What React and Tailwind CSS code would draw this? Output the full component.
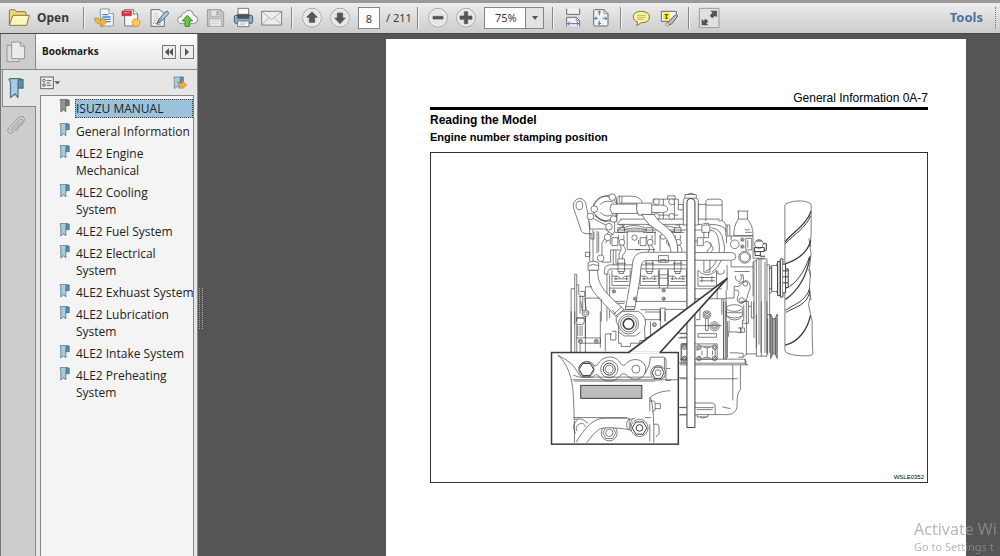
import React, { useState } from 'react';

const bookmarks = [
  { id: 1, title: 'ISUZU MANUAL' },
  { id: 2, title: 'General Information' },
  { id: 3, title: '4LE2 Engine\nMechanical' },
  { id: 4, title: '4LE2 Cooling\nSystem' },
  { id: 5, title: '4LE2 Fuel System' },
  { id: 6, title: '4LE2 Electrical\nSystem' },
  { id: 7, title: '4LE2 Exhuast System' },
  { id: 8, title: '4LE2 Lubrication\nSystem' },
  { id: 9, title: '4LE2 Intake System' },
  { id: 10, title: '4LE2 Preheating\nSystem' },
];

const Icon = ({ children }) => (
  <svg viewBox="0 0 66 66" className="size-[22px] shrink-0" fill="none" stroke="#6b6b6b" strokeWidth="3" strokeLinejoin="round" aria-hidden="true">
    {children}
  </svg>
);

const FolderIcon = () => (
  <Icon>
    <path d="M4 54 V12 Q4 8 8 8 H20 L25 14 H51 Q54 14 54 18 V26" fill="#e9d878" stroke="#8a7a3a" />
    <path d="M4 55 L15 25 H64 L56 55 Z" fill="#fdf6b8" stroke="#8a7a3a" />
    <path d="M12 47 L19 31 H55" stroke="#fffde8" />
  </Icon>
);

const ExportIcon = () => (
  <Icon>
    <path d="M22 6 H48 L61 19 V57 H22 Z" fill="#f3f7fb" stroke="#8d949b" />
    <path d="M48 6 V19 H61" fill="#fff" stroke="#8d949b" />
    <path d="M28 23 H46 M28 30 H53 M28 37 H53 M34 44 H53" stroke="#4384d6" strokeWidth="4" />
    <path d="M5 33 Q3 51 26 51 V60 L42 45 L26 32 V41 Q16 41 16 33 Z" fill="#f5b43c" stroke="#b8832b" strokeWidth="2" />
  </Icon>
);

const CreateIcon = () => (
  <Icon>
    <path d="M11 8 H37 L50 21 V57 H11 Z" fill="#f5f5f5" stroke="#777" />
    <path d="M37 8 V21 H50" fill="#fff" stroke="#777" />
    <rect x="3" y="12" width="28" height="14" fill="#e2353b" stroke="#a62b30" strokeWidth="2" />
    <path d="M8 17 H25" stroke="#f28a8c" />
    <circle cx="45" cy="47" r="11" fill="#f9bd4b" stroke="#d99a32" strokeWidth="5" strokeDasharray="5 3.6" />
    <circle cx="45" cy="47" r="9" fill="#fcc75d" stroke="none" />
  </Icon>
);

const SignIcon = () => (
  <Icon>
    <path d="M6 8 H33 L46 21 V58 H6 Z" fill="#f3f3f3" />
    <path d="M13 20 H27 M13 27 H31 M13 34 H28 M13 41 H24" stroke="#b5b5b5" strokeWidth="2" />
    <path d="M24 50 L30 36 L49 15 Q57 10 58 16 Q59 22 54 26 L37 43 Z" fill="#a9c9de" stroke="#4e6475" />
    <path d="M24 50 L40 32 M11 51 Q17 43 20 49 T35 51" stroke="#52616d" strokeWidth="2" />
  </Icon>
);

const CloudIcon = () => (
  <Icon>
    <path d="M14 50 Q1 49 2 38 Q3 28 13 28 Q14 16 23 17 Q28 8 38 10 Q50 12 50 25 Q62 26 62 38 Q61 50 49 50 Z" fill="#f4f4f4" stroke="#888" />
    <path d="M31 25 L47 42 H38 V58 H24 V42 H15 Z" fill="#66c83d" stroke="#3f8f2b" />
  </Icon>
);

const SaveIcon = () => (
  <Icon>
    <path d="M7 8 H48 L56 16 V58 H7 Z" fill="#c6c6c6" stroke="#9b9b9b" />
    <rect x="17" y="9" width="28" height="19" fill="#e3e3e3" stroke="#a5a5a5" strokeWidth="2" />
    <rect x="34" y="12" width="7" height="13" fill="#aaa" stroke="none" />
    <rect x="14" y="36" width="35" height="22" fill="#ededed" stroke="#a5a5a5" strokeWidth="2" />
    <path d="M19 43 H44 M19 50 H44" stroke="#bdbdbd" strokeWidth="2" />
  </Icon>
);

const PrintIcon = () => (
  <Icon>
    <path d="M15 26 V4 H47 V26" fill="#fafafa" stroke="#777" />
    <rect x="4" y="25" width="55" height="24" rx="5" fill="#7eb2d2" stroke="#4a6070" />
    <path d="M14 22 H48 V34 H14 Z" fill="#4b5760" stroke="#3e4950" strokeWidth="2" />
    <path d="M14 42 H48 V59 H14 Z" fill="#fafafa" stroke="#777" />
    <path d="M20 48 H42 M20 53 H36" stroke="#aaa" strokeWidth="2" />
  </Icon>
);

const MailIcon = () => (
  <Icon>
    <rect x="2" y="13" width="60" height="41" fill="#ededed" stroke="#808080" />
    <path d="M4 15 L32 38 L60 15 M4 52 L24 32 M60 52 L40 32" stroke="#8f8f8f" strokeWidth="2" />
  </Icon>
);

const RoundIcon = ({ d }) => (
  <Icon>
    <circle cx="33" cy="32" r="28" fill="#e6e6e6" stroke="#a3a3a3" />
    <circle cx="33" cy="32" r="25" stroke="#f8f8f8" strokeWidth="2" />
    <path d={d} fill="#555" stroke="#555" strokeWidth="2" />
  </Icon>
);

const FitWidthIcon = () => (
  <Icon>
    <path d="M14 5 V22 H53 V5" fill="#f1f1f1" />
    <path d="M14 58 V31 H43 L53 41 V58" fill="#f1f1f1" />
    <path d="M43 31 V41 H53" strokeWidth="2" />
    <path d="M17 50 H50 M23 44 L17 50 L23 56 M44 44 L50 50 L44 56" stroke="#4f6fc0" />
  </Icon>
);

const FitPageIcon = () => (
  <Icon>
    <path d="M13 8 H42 L54 20 V54 Q54 57 50 57 H15 Q11 57 11 54 V10 Q11 8 13 8 Z" fill="#f1f1f1" />
    <path d="M42 8 V20 H54" strokeWidth="2" />
    <path d="M28 12 V25 M23 17 L28 12 L33 17 M28 53 V41 M23 48 L28 53 L33 48 M14 34 H24 M19 29 L14 34 L19 39 M51 34 H38 M46 29 L51 34 L46 39" stroke="#4f6fc0" />
  </Icon>
);

const CommentIcon = () => (
  <Icon>
    <path d="M34 13 Q58 14 58 30 Q58 47 34 47 L20 56 L23 45 Q10 41 10 29 Q10 14 34 13 Z" fill="#fbf59b" stroke="#777548" />
    <path d="M21 25 H47 M21 31 H47 M21 37 H41" stroke="#9a9560" strokeWidth="2" />
  </Icon>
);

const HighlightIcon = () => (
  <Icon>
    <path d="M10 13 H55 V32 L45 43 H10 Z" fill="#f4f4f4" />
    <rect x="15" y="17" width="20" height="21" fill="#fff200" stroke="none" />
    <path d="M20 23 H31 M25 23 V34 M22 34 H29" stroke="#444" />
    <path d="M28 48 L48 27 Q58 20 59 27 L41 51 L30 54 Z" fill="#bdbdbd" stroke="#666" />
    <circle cx="28" cy="52" r="5" fill="#fff04a" stroke="#777" strokeWidth="2" />
  </Icon>
);

const FullscreenIcon = () => (
  <Icon>
    <rect x="4" y="4" width="59" height="58" fill="#e0e0e0" stroke="#9c9c9c" />
    <path d="M37 11 H57 V31 L51 26 L43 34 L35 26 L43 17 Z M11 36 L17 41 L23 35 L31 43 L25 49 L31 55 H11 Z" fill="#555" stroke="none" />
  </Icon>
);

const BookmarkIcon = ({ gray, className }) => (
  <svg viewBox="0 0 32 42" className={className} strokeWidth="2.5" strokeLinejoin="round" aria-hidden="true">
    <path d="M20 3 H30 V20 H20 Z" fill={gray ? '#777' : '#5f90ad'} stroke={gray ? '#666' : '#48697e'} />
    <path d="M2 3 Q3 1 6 1 H25 Q20 2 20 8 V39 L14 32 L5 39 V8 Z" fill={gray ? '#929292' : '#a6cbe3'} stroke={gray ? '#666' : '#56758a'} />
  </svg>
);

const PagesIcon = () => (
  <svg viewBox="0 0 60 66" className="h-[22px] w-5" fill="#dcdcdc" stroke="#969696" strokeWidth="3" aria-hidden="true">
    <path d="M3 13 H40 V62 H3 Z" />
    <path d="M17 3 H43 L56 16 V53 H17 Z" fill="#ebebeb" />
    <path d="M43 3 V16 H56" fill="none" />
  </svg>
);

const ClipIcon = () => (
  <svg viewBox="0 0 60 62" className="size-5" fill="none" stroke="#9c9c9c" strokeWidth="3" strokeLinecap="round" aria-hidden="true">
    <path d="M16 42 L40 16 Q46 11 49 15 Q52 19 47 25 L23 52 Q14 61 7 55 Q0 48 8 39 L35 10 Q46 0 54 6 Q61 13 52 25 L30 49" />
    <path d="M13 46 Q17 51 22 45 L42 23" />
  </svg>
);

const Separator = () => <div className="mx-[5px] h-[22px] w-0.5 shrink-0 border-l border-[#858585] bg-[#f5f5f5]" />;

const ToolButton = ({ label, children }) => (
  <button aria-label={label} title={label} className="flex h-6 w-7 shrink-0 items-center justify-center">
    {children}
  </button>
);

const Toolbar = () => {
  const [page, setPage] = useState('8');
  const [zoom, setZoom] = useState('75%');

  return (
    <header className="flex h-[34px] shrink-0 items-center border-t-3 border-b border-t-[#9a9a9a] border-b-[#4a4a4a] bg-linear-to-b from-[#ededed] to-[#cccccc] text-xs text-[#3a3a3a]">
      <button className="flex w-[78px] shrink-0 items-center gap-[7px] pl-2 font-bold">
        <FolderIcon />
        Open
      </button>
      <Separator />
      <ToolButton label="Export"><ExportIcon /></ToolButton>
      <ToolButton label="Create"><CreateIcon /></ToolButton>
      <ToolButton label="Sign"><SignIcon /></ToolButton>
      <ToolButton label="Upload"><CloudIcon /></ToolButton>
      <ToolButton label="Save"><SaveIcon /></ToolButton>
      <ToolButton label="Print"><PrintIcon /></ToolButton>
      <ToolButton label="Email"><MailIcon /></ToolButton>
      <Separator />
      <ToolButton label="Previous page"><RoundIcon d="M33 14 L49 31 H41 V46 H25 V31 H17 Z" /></ToolButton>
      <ToolButton label="Next page"><RoundIcon d="M33 50 L49 33 H41 V18 H25 V33 H17 Z" /></ToolButton>
      <input
        aria-label="Page number"
        value={page}
        onChange={(e) => setPage(e.target.value)}
        className="ml-1 h-[22px] w-[22px] shrink-0 border border-[#858585] bg-white text-center text-[11px]"
      />
      <span className="w-8 shrink-0 pl-1.5 text-[11px] whitespace-pre">/ 211</span>
      <Separator />
      <ToolButton label="Zoom out"><RoundIcon d="M18 28 H48 V36 H18 Z" /></ToolButton>
      <ToolButton label="Zoom in"><RoundIcon d="M28 14 H38 V27 H51 V37 H38 V50 H28 V37 H15 V27 H28 Z" /></ToolButton>
      <div className="relative mr-[3px] ml-1 h-[22px] w-[60px] shrink-0 border border-[#858585] bg-white">
        <select
          aria-label="Zoom level"
          value={zoom}
          onChange={(e) => setZoom(e.target.value)}
          className="block h-5 w-full appearance-none pl-2.5 text-[11px]"
        >
          <option>75%</option>
          <option>100%</option>
        </select>
        <div className="pointer-events-none absolute inset-y-0 right-0 flex w-[18px] items-center justify-center border-l border-[#858585] bg-[#e3e3e3]">
          <div className="border-x-3 border-t-4 border-x-transparent border-t-[#555]" />
        </div>
      </div>
      <Separator />
      <ToolButton label="Fit width"><FitWidthIcon /></ToolButton>
      <ToolButton label="Fit page"><FitPageIcon /></ToolButton>
      <Separator />
      <ToolButton label="Comment"><CommentIcon /></ToolButton>
      <ToolButton label="Highlight"><HighlightIcon /></ToolButton>
      <Separator />
      <ToolButton label="Full screen"><FullscreenIcon /></ToolButton>
      <button className="mr-3 ml-auto text-[13px] font-bold text-[#4f739b]">Tools</button>
      <div className="mr-1 h-[22px] border-l border-dotted border-[#777]" />
    </header>
  );
};

const Rail = () => (
  <nav className="flex w-9 shrink-0 flex-col border-l border-[#777] bg-[#cdcdcd]">
    <button aria-label="Pages" className="flex h-9 items-center justify-center border-r border-b border-[#8a8a8a] pr-1">
      <PagesIcon />
    </button>
    <button aria-label="Bookmarks" className="ml-px flex h-[37px] items-center justify-center border-b border-l border-[#8a8a8a] bg-[#e6e6e6] pr-2">
      <BookmarkIcon className="h-[21px] w-4" />
    </button>
    <button aria-label="Attachments" className="flex h-9 items-center justify-center border-r border-[#8a8a8a] pr-1">
      <ClipIcon />
    </button>
    <div className="grow border-r border-[#8a8a8a]" />
  </nav>
);

const BookmarkPanel = () => {
  const [selected, setSelected] = useState(1);

  return (
    <aside className="flex w-[162px] shrink-0 flex-col border-r border-[#8a8a8a] bg-[#e6e6e6]">
      <div className="flex h-9 shrink-0 items-center border-b border-[#8a8a8a] bg-linear-to-b from-white to-[#e4e4e4] pr-[3px] pl-1.5">
        <h2 className="grow text-[10px] font-bold text-[#1c1c1c]">Bookmarks</h2>
        <button aria-label="Collapse" className="mr-1 flex size-3.5 items-center justify-center border border-[#777] bg-[#eee]">
          <svg viewBox="0 0 10 10" className="size-2.5" fill="#555"><path d="M5 1 V9 L1 5 Z M9 1 V9 L5 5 Z" /></svg>
        </button>
        <button aria-label="Expand" className="flex size-3.5 items-center justify-center border border-[#777] bg-[#eee]">
          <svg viewBox="0 0 10 10" className="size-2.5" fill="#555"><path d="M3 1 V9 L7 5 Z" /></svg>
        </button>
      </div>

      <div className="flex h-[25px] shrink-0 items-center justify-between pr-2.5 pl-1">
        <button aria-label="Options">
          <svg viewBox="0 0 63 42" className="h-3.5 w-[21px]" fill="none" stroke="#666" strokeWidth="3">
            <rect x="2" y="3" width="38" height="35" fill="#eee" />
            <circle cx="12" cy="14" r="4" />
            <circle cx="12" cy="27" r="4" />
            <path d="M20 14 H34 M20 21 H30 M20 28 H34" />
            <path d="M43 16 H61 L52 25 Z" fill="#555" stroke="none" />
          </svg>
        </button>
        <button aria-label="Find current bookmark">
          <svg viewBox="0 0 42 42" className="size-3.5" strokeLinejoin="round">
            <path d="M22 3 H31 V20 H22 Z" fill="#5f90ad" stroke="#48697e" strokeWidth="2" />
            <path d="M2 3 H26 Q21 4 21 9 V38 L13 31 L4 38 V8 Z" fill="#a6cbe3" stroke="#56758a" strokeWidth="2" />
            <path d="M14 17 L21 23 H27 V15 L41 27 L27 39 V32 H19 Z" fill="#f6b43b" stroke="#b17b24" strokeWidth="2" />
          </svg>
        </button>
      </div>

      <ul className="mr-[3px] ml-1 flex grow flex-col gap-[5px] border-x border-t border-[#858585] bg-[#f4f4f4] pt-[3px] font-['Open_Sans','Noto_Sans',sans-serif] text-xs leading-[17px] whitespace-pre text-[#222]">
        {bookmarks.map((item) => (
          <li key={item.id} className="flex items-start pl-[18px]">
            <BookmarkIcon gray={item.id === selected} className="mr-[5px] h-3.5 w-[11px] shrink-0" />
            <a
              href="#"
              onClick={() => setSelected(item.id)}
              className={item.id === selected ? 'grow border border-dotted border-[#444] bg-[#9bc3de]' : 'grow pl-px'}
            >
              {item.title}
            </a>
          </li>
        ))}
      </ul>
    </aside>
  );
};

const Bolt = ({ x, y, r = 8 }) => (
  <>
    <circle cx={x} cy={y} r={r} fill="white" />
    <circle cx={x} cy={y} r={r / 2} />
  </>
);

/* injector with its fuel line, one for each cylinder */
const Injector = ({ x }) => (
  <g transform={`translate(${x} 0)`}>
    <path d="M-10 138 H10 V152 H-10 Z M-6 130 H6 V138 M-20 152 H20 M-28 168 H-10 V192 H-28 Z M-33 175 V188 M-8 160 V174 M8 160 V174" />
    <circle cx="2" cy="182" r="9" />
    <path d="M-4 190 Q4 200 -2 208 Q-10 216 -6 230 M5 190 Q18 205 10 214 Q0 222 4 232 M-10 232 H10 V270 H-10 Z M-14 245 H14 M-7 270 V276 H7 V270" />
    <path d="M-28 266 V312 H27 V266 M-28 284 H-10 L-4 290 M27 284 H10 L4 290 M-22 292 H22 M-22 300 H22 M-16 284 V296 M16 284 V296" />
  </g>
);

const CylinderHead = () => (
  <g transform="translate(345 84)">
    <path d="M84 78 C80 54 102 44 114 54 C124 62 122 76 127 92 L133 142 M84 78 L108 148 Q112 156 122 156 H140" />
    <ellipse cx="102" cy="71" rx="10" ry="13" />
    <path d="M133 120 V240 M143 145 V240 M155 148 V216 M160 150 V212 M133 142 H175 M120 212 H133 V225 H120 Z M137 156 V172 H146 V150" />
    <path d="M175 140 L205 160 M170 242 V185 L190 150 M208 120 V150 L180 185 M170 242 H196 V205 H225 M142 110 L188 133 M148 102 L182 121" />
    <circle cx="180" cy="80" r="37" />
    <path d="M145 72 Q160 42 192 40 M212 50 Q222 80 212 112 M215 45 V122 M222 43 V64 M230 43 V64 M218 43 H262 Q288 45 292 66 M222 64 H275 M150 98 Q166 124 198 118" />
    <path d="M198 67 H276 V95 H200 Q190 82 198 67 Z M165 68 Q180 52 205 62 M165 92 Q182 110 204 98" fill="white" />
    <path d="M276 64 H320 V100 H280 Q270 82 276 64 Z M320 70 H352 Q368 72 368 82 Q368 92 352 92 H320" fill="white" />
    <path d="M324 64 V52 H400 V68 H415 V112 M324 98 V112 M388 52 V112 M368 52 V42 H390 V52 M355 52 V70 M355 92 V112 M400 68 V84 H415 M310 100 H400 M225 112 H425 M228 112 L216 128 H425 M240 128 L220 145" />
    {[[334, 60], [380, 60], [334, 104], [380, 104]].map(([cx, cy]) => (
      <circle key={`${cx}-${cy}`} cx={cx} cy={cy} r="9" fill="white" />
    ))}
    <path d="M215 145 H425 M235 138 Q265 125 300 138 M235 144 Q268 134 304 144 M330 138 Q360 128 392 138 M244 150 H300 M246 150 V204 H286 M330 150 V190 M340 150 H390 M345 160 V208 M374 150 V170" />
    <circle cx="268" cy="168" r="8" />
    <circle cx="354" cy="165" r="8" />
    <Injector x={228} />
    <Injector x={313} />
    <Injector x={398} />
    <path d="M290 98 Q296 112 312 128 C340 152 372 156 378 214 H398 C400 150 362 138 340 116 L326 98 Z" fill="white" />
    <path d="M178 278 V264 Q180 250 195 250 H425 M188 278 V268 Q190 262 197 262 H425 M178 278 H188 M270 204 H330 M204 205 V250 M212 205 V250" />
    <path d="M425 212 H300 C275 212 264 225 262 245 C258 290 250 330 240 385 H268 C278 330 286 290 287 262 C288 244 292 237 306 237 H425" fill="white" />
    <path d="M240 376 H270 M242 384 H266 M340 222 H370 V242 H340 Z M347 242 V234 H362 V242" />
    <path d="M185 278 V420 M193 278 V410 M193 320 H245 M278 320 H425 M193 360 H240 M270 360 H425 M193 366 H238 M343 320 V262 M368 320 V262 M343 280 H368 M343 290 H368 M343 312 H368 M345 420 V380 H360 V420 M360 384 H425" />
    <Bolt x={206} y={330} r={5} />
    <Bolt x={270} y={352} r={5} />
    <Bolt x={356} y={327} r={5} />
    <Bolt x={356} y={352} r={5} />
    <path d="M132 266 V296 C134 330 160 348 214 408 L238 386 C190 342 156 318 157 266 Z" fill="white" />
    <path d="M128 244 Q144 234 160 244 V266 H128 Z M130 252 Q144 246 160 252 M206 398 L230 376 M212 404 L236 384" fill="white" />
    {[[201, 46], [147, 82], [135, 104], [205, 112], [191, 135], [187, 167], [166, 230]].map(([cx, cy]) => (
      <circle key={cx} cx={cx} cy={cy} r="10" fill="white" />
    ))}
    <path d="M94 420 V278 H88 V430 M88 322 H77 V514 M94 310 H100 V340 M100 345 H118 V330 H104 M104 340 V396 M112 345 V390 M118 350 L124 396 H112 L106 360 M120 316 V514 M120 316 H140 M120 350 H165 M168 352 V420 M94 410 H118" />
    <path d="M120 390 H130 V400 H110" />
  </g>
);

const CrankCase = () => (
  <g transform="translate(345 474)">
    <path d="M77 0 V124 M88 0 V124 M94 20 V124 M92 20 H116 Q120 30 112 40 H94 M97 44 V74 M104 44 V74 M110 44 V74 M92 80 H165 V96 H104 V124 M165 0 V110 M120 14 V80" />
    <Bolt x={105} y={90} r={6} />
    <Bolt x={153} y={90} r={6} />
    <Bolt x={120} y={6} r={10} />
    <path d="M180 120 V68 H200 M200 60 H212 V86 H196 V66 M212 10 L200 -5 M220 45 Q200 20 232 0 L280 0 Q310 20 298 50 L300 88 H284 V96 H256 V106 H228 V96 H220 Z" fill="white" />
    <circle cx="250" cy="38" r="30" fill="white" />
    <circle cx="250" cy="38" r="24" />
    <circle cx="250" cy="38" r="16" strokeWidth="5" />
    <path d="M220 62 L238 74 H270 L286 62 M286 -5 H346 V25 H300 M346 0 V48 H380 M360 0 V30 M316 30 V80 M300 80 L340 70 M300 2 H346" />
    <Bolt x={328} y={40} r={6} />
    <path d="M290 110 L330 84 M380 66 H425 M400 80 H425 M400 155 H425 M400 200 H425 M400 290 H425 M400 312 H425 M408 98 H425 M408 98 V150 H425" />
    <Bolt x={419} y={104} r={6} />
    <Bolt x={419} y={142} r={6} />
  </g>
);

const FrontCover = () => (
  <g transform="translate(780 84)">
    <path d="M15 65 H25 V118 M25 68 H48 M48 118 V58 Q50 52 58 52 H90 Q97 53 97 60 V115 Q90 122 84 115 M48 70 H97 M25 112 H90 M97 115 L108 128 V163" />
    <path d="M36 130 H60 V152 H36 Z M40 125 H56 V130 M15 128 H36 M60 128 Q104 128 110 150 M15 145 H36 M60 145 Q82 146 86 175 Q94 210 80 235 Q70 262 48 268 M64 138 Q96 142 100 178 Q110 200 96 234 Q84 262 66 272" />
    <path d="M42 152 V168 H56 V152 M22 168 H40 V192 H22 Z M15 178 H22 M44 182 Q52 176 62 184 Q68 190 60 198 Q46 212 52 228 M58 186 Q78 200 64 210 Q56 220 62 236 M42 232 H60 V272 H42 Z" />
    <path d="M143 88 H176 M146 88 V112 M173 88 V112 M146 112 Q132 130 132 162 H190 Q190 130 173 112 M146 112 H173 M165 142 L172 146 L180 142 M166 152 H186 M120 130 V162 M112 130 V162 M110 130 H120" />
    <path d="M110 163 H190 V230 H225 M124 163 V176 M110 163 V185" />
    <circle cx="135" cy="188" r="13" fill="white" />
    <Bolt x={158} y={174} r={5} />
    <Bolt x={158} y={195} r={5} />
    <path d="M168 170 H186 V205 H168 Z M174 176 V198" />
    <circle cx="208" cy="187" r="13" />
    <path d="M194 198 H224 V210 H194 Z M196 210 V222 H212 M222 186 H230 V206 H222 M200 178 H216 M212 210 V224 H226" strokeWidth="3" />
    <path d="M15 213 H126 Q138 214 138 225 Q138 236 126 236 H15" fill="white" />
    <circle cx="165" cy="227" r="18" fill="white" />
    <circle cx="165" cy="227" r="14" />
    <path d="M124 256 H190 M124 238 V256 M134 270 H180 M190 240 V345 M112 250 V325 M24 266 V314 H80 V266 Q68 280 48 280 Q34 278 24 266 M28 288 H76 M28 298 H76 M36 284 V302 M66 284 V302 M84 268 V278 H94 Q104 278 104 266 M15 322 H96 M15 352 H108 M82 352 V322" />
    <path d="M137 284 Q136 300 150 300 Q160 286 152 280 H160 L162 296 Q156 306 146 306 M160 300 Q150 320 134 314 Q130 330 144 326 Q152 338 144 346 Q138 362 154 366 Q172 362 174 340 L182 318 Q180 296 168 298 Z" />
    <circle cx="167" cy="307" r="7" />
    <circle cx="156" cy="357" r="8" />
    <path d="M109 350 H133 V324 M102 352 V535 M109 325 V535 M96 352 V400" />
    <path d="M193 470 V238 H200 M200 500 V235 Q201 232 204 232 H232 V515 M208 232 V490 M214 232 V515 M226 240 V515 M232 250 H240 V515 M240 256 H246 V330 M246 252 H264 V330 H246 Z M238 260 H246 M238 322 H246 M238 334 H246" />
    <path d="M264 240 H272 V342 H264 Z M272 232 H280 V347 H272 Z M260 248 H264 M260 332 H264" strokeWidth="3" />
  </g>
);

const LowerFront = () => (
  <g transform="translate(750 444)">
    <path d="M44 25 L60 8 V55 H48 M44 73 H126 M54 97 H110 V108 H54 Z M0 97 H20 M0 108 H20 M5 180 V128 H112 V174 M58 135 H106 V174 H58 M56 146 H48 M82 140 V168" />
    <circle cx="81" cy="40" r="12" />
    <Bolt x={81} y={40} r={8} />
    <path d="M77 52 V88 H85 V52" />
    <circle cx="104" cy="75" r="14" />
    <circle cx="104" cy="75" r="9" />
    <circle cx="104" cy="75" r="5" />
    {[[14, 138], [14, 172], [57, 138], [104, 138], [57, 172], [104, 172]].map(([x, y]) => (
      <Bolt key={`${x}-${y}`} x={x} y={y} r={7} />
    ))}
    <path d="M70 138 Q82 142 92 138 M70 170 Q82 166 92 170 M66 148 V162 M98 148 V162" />
    <path d="M131 0 V174 M138 0 V174 M143 60 V170 M200 -5 V160" />
    <ellipse cx="164" cy="20" rx="24" ry="10" />
    <path d="M140 26 V44 Q150 56 164 56 Q182 56 188 44 V26 M142 34 H186 M142 44 Q164 56 186 44 M184 0 H206 V66 H190 M192 10 V60 M148 58 V92 H144 M188 56 V78 M146 94 V106 M148 92 H176 M182 80 H194 V93 H182 Z M174 80 H184 V94 H174 M176 156 H190 V168 H176 M150 155 H176 M190 168 L202 158 H230" />
    <path d="M206 15 H214 M215 0 V50 H222 V0 M230 40 V165 H262 M245 0 V165 M262 0 V165 M262 40 H274 M264 50 V160" />
    <path d="M273 38 L280 52 H286 L293 38 V172 L286 158 H280 L273 172 Z" fill="#a5a5a8" />
    <path d="M278 52 V158 M288 52 V158" />
    <path d="M0 174 H196 L200 186 H0 M196 174 V186 M196 186 L202 192 M0 191 H205" />
    <path d="M159 192 V298 M182 192 V265 Q172 276 172 296 V316 Q170 340 142 341 H45 M0 233 H174 M0 319 H20 M45 306 H98 Q108 308 106 320 V341 M45 320 H102 M50 326 H98 M128 318 L152 323 M52 341 V348 H84 V341 M60 348 Q68 356 78 348 M0 341 H20" />
  </g>
);

const Fan = () => (
  <g transform="translate(780 84)">
    <path d="M286 70 Q286 64 300 62 C330 52 362 60 365 68 V160 L361 195 L365 215 L360 260 L363 275 L360 320 L363 345 L357 370 L368 420 Q368 480 370 512 Q372 524 356 524 Q310 525 290 514 Q286 510 286 504 Z" fill="white" />
    <path d="M287 180 C312 150 350 130 365 88 M287 247 C320 236 354 214 364 176 M288 354 C322 330 352 286 362 224 M287 492 C326 482 354 446 363 402" strokeWidth="4" />
    <path d="M287 186 C316 156 352 136 363 102 M290 320 C318 308 344 274 360 226 M290 393 C316 376 350 374 362 330 M288 387 C314 368 346 362 361 322" strokeWidth="3" />
    <path d="M358 170 L364 196 M357 262 L364 285 M357 325 L365 356" />
    <path d="M280 248 H288 V334 H280 M288 262 H296 V318 H288 M280 268 H296 M280 286 H296 M280 304 H296" fill="white" strokeWidth="3" />
  </g>
);

/* enlarged view of the stamping position */
const Callout = () => (
  <>
    <path d="M595 600 L893 374 L690 600 Z" fill="white" stroke="none" />
    <g transform="translate(345 474)">
      <rect x="18" y="124" width="382" height="276" fill="white" strokeWidth="4.5" />
      <path d="M252 124 H343" stroke="white" strokeWidth="6" />
      <path d="M37 132 C66 156 82 200 84 260 C86 310 88 350 87 396 M37 132 Q58 142 76 156 C92 170 96 190 110 198 H142 Q150 186 158 192 C172 216 212 216 226 192 Q234 184 242 190 C256 210 290 210 302 184 Q316 160 316 138" />
      <path d="M100 170 C106 146 140 146 146 164 Q154 168 160 156 C174 132 214 130 226 158 Q236 168 244 156 C262 138 296 142 302 170 Q302 184 298 188 M84 192 L100 198 H320 M80 206 H400 M86 210 H330" />
      <circle cx="123" cy="175" r="23" />
      <path d="M112 157 H134 L145 175 L134 193 H112 L101 175 Z" strokeWidth="3" />
      <circle cx="192" cy="174" r="26" />
      <circle cx="192" cy="174" r="18" strokeWidth="3" />
      <circle cx="192" cy="174" r="12" />
      <circle cx="272" cy="174" r="12" />
      <path d="M316 138 H356 Q363 140 363 148 V208 M363 172 H376 M363 208 H378 M358 140 V200" />
      <circle cx="339" cy="185" r="22" fill="white" />
      <path d="M330 168 H348 L357 185 L348 202 H330 L321 185 Z" strokeWidth="3" />
      <circle cx="339" cy="185" r="9" />
      <rect x="106" y="223" width="184" height="39" fill="#bdbdc0" strokeWidth="3" />
      <path d="M376 239 C345 240 326 250 314 260 V300 M316 260 Q328 290 326 396 M314 392 V340 M314 270 H326 L330 276 V298 L322 302 M330 278 H346 V293 H330 M326 340 H338 L342 348 V370 L332 378" />
      <path d="M84 320 H245 M300 320 H318 M88 326 Q110 318 128 338 M90 368 Q76 340 98 326 M94 360 C86 340 116 328 120 348" />
      <circle cx="192" cy="366" r="24" />
      <path d="M182 349 H202 L211 366 L202 383 H182 L173 366 Z" />
      <circle cx="192" cy="366" r="11" />
      <path d="M92 394 C120 350 142 322 178 322 H252 V356 C210 350 172 348 160 356 Q142 368 124 396" fill="white" />
      <path d="M250 326 Q238 342 250 356 M262 324 Q250 340 262 358 M250 326 L270 322 M250 356 L268 362" fill="white" />
      <circle cx="283" cy="351" r="26" fill="white" />
      <path d="M272 333 H294 L305 351 L294 370 H272 L261 351 Z" strokeWidth="3" />
      <circle cx="283" cy="351" r="10" strokeWidth="3" />
    </g>
    <path d="M595 598 L893 374 L690 598" strokeWidth="5" />
  </>
);

const EngineDrawing = () => (
  <svg viewBox="0 -3 1494 990" className="block w-full" fill="none" stroke="#3c3c3c" strokeWidth="2" role="img" aria-label="Engine number stamping position">
    <CylinderHead />
    <CrankCase />
    <FrontCover />
    <LowerFront />
    <Fan />
    <path d="M760 214 V140 Q760 133 768 133 H798 Q805 134 805 142 V214 Z" fill="white" />
    <path d="M771 824 V144 Q772 134 783 134 Q794 134 795 144 V824 Z" fill="white" strokeWidth="3" />
    <path d="M765 133 V122 H772 Q783 114 794 122 H799 V133 M772 122 H794" />
    <Callout />
  </svg>
);

const ManualPage = () => (
  <main className="mt-[5px] mr-[34px] ml-[188px] grow overflow-hidden bg-white pt-[51px] pr-[38px] pl-11 font-['Liberation_Sans',Arial,sans-serif] text-black">
    <p className="border-b-3 border-black pb-px text-right text-xs leading-4">General Information 0A-7</p>
    <h1 className="mt-px text-xs leading-[18px] font-bold">Reading the Model</h1>
    <h2 className="text-[11px] leading-4 font-bold">Engine number stamping position</h2>
    <figure className="relative mt-[7px] border border-[#333]">
      <EngineDrawing />
      <figcaption className="absolute right-[3px] bottom-px text-[6px] leading-2">WSLE0352</figcaption>
    </figure>
  </main>
);

const App = () => (
  <div className="flex h-screen flex-col overflow-hidden bg-[#555] font-['Noto_Sans','Open_Sans',sans-serif]">
    <Toolbar />
    <div className="flex min-h-0 grow">
      <Rail />
      <BookmarkPanel />
      <div className="relative flex min-w-0 grow">
        <div className="absolute top-[254px] left-px h-[41px] w-1 border-x border-dotted border-[#aaa]" />
        <ManualPage />
      </div>
    </div>
    <div className="pointer-events-none fixed right-0 bottom-0 w-[86px] whitespace-nowrap text-[#999]/70">
      <p className="text-base leading-[18px]">Activate Wi</p>
      <p className="text-[11px] leading-[18px]">Go to Settings t</p>
    </div>
  </div>
);

export default App;
